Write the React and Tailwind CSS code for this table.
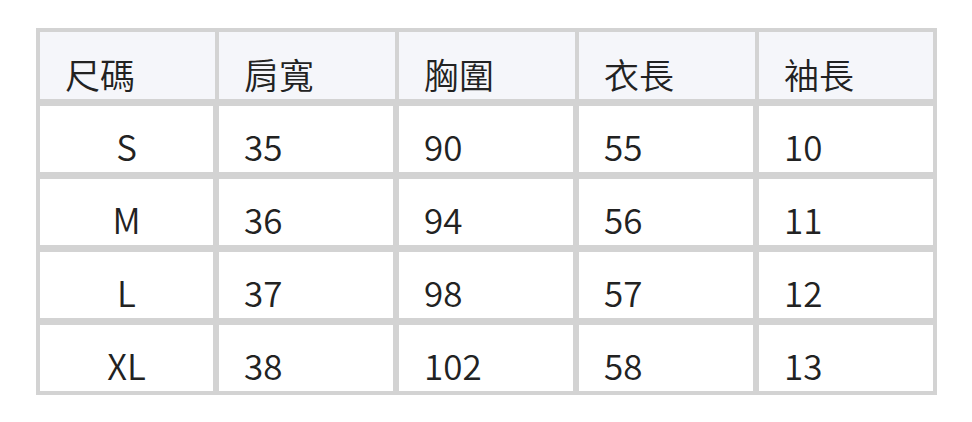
import React from "react";

const headers = ["尺碼", "肩寬", "胸圍", "衣長", "袖長"];
const rows = [
  ["S", "35", "90", "55", "10"],
  ["M", "36", "94", "56", "11"],
  ["L", "37", "98", "57", "12"],
  ["XL", "38", "102", "58", "13"],
];

export default function App() {
  return (
    <div
      className="bg-white w-[972px] h-[422px] pt-[28px] pl-[36px] text-[#222222] font-[350]"
      style={{ fontFamily: '"Noto Sans CJK TC", "Noto Sans", sans-serif' }}
    >
      <div className="w-[901px] bg-[#d3d3d3] p-[4px] flex flex-col gap-[7px]">
        <div className="grid grid-cols-[175px_176px_176px_176px_174px] gap-[4px] h-[67px]">
          {headers.map((h) => (
            <div key={h} className="bg-[#f5f6fa] pl-[25px] pt-[24px] text-[35px] leading-[35px]">
              {h}
            </div>
          ))}
        </div>
        {rows.map((r) => (
          <div key={r[0]} className="grid grid-cols-[173px_174px_174px_174px_174px] gap-[6px] h-[66px]">
            {r.map((c, i) => (
              <div
                key={i}
                className={
                  i === 0
                    ? "bg-white text-center pt-[22px] text-[35px] leading-[35px]"
                    : "bg-white pl-[25px] pt-[22px] text-[35px] leading-[35px]"
                }
              >
                {c}
              </div>
            ))}
          </div>
        ))}
      </div>
    </div>
  );
}
